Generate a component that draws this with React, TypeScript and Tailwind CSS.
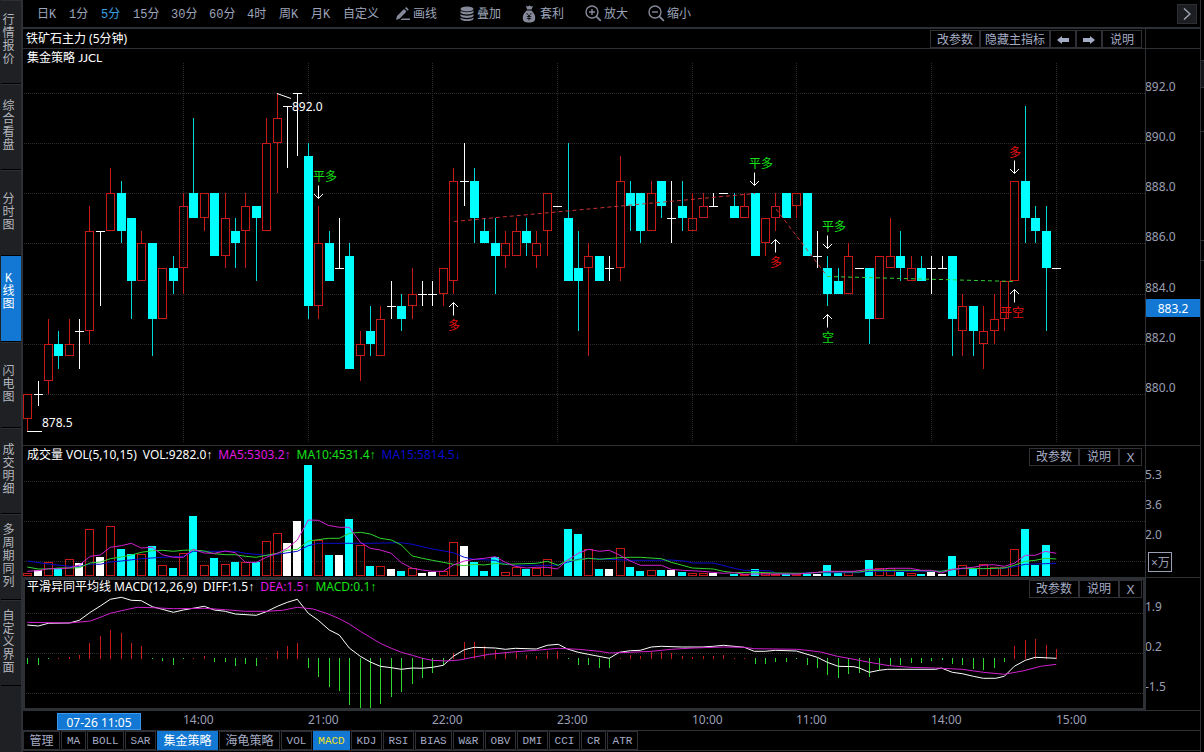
import React from "react";

type Kind = "up" | "down" | "flat";
type Candle = [Kind, number, number, number, number];

const RED = "#c41a1a";
const CYAN = "#00ffff";
const WHITE = "#ffffff";
const GREEN = "#2fd62f";
const MAGENTA = "#d020d0";
const BLUE = "#0a0acc";
const GRID = "#2b2b2b";

const u = (top: number, bottom: number, high = top, low = bottom): Candle => ["up", top, bottom, high, low];
const d = (top: number, bottom: number, high = top, low = bottom): Candle => ["down", top, bottom, high, low];
const f = (price: number, high = price, low = price): Candle => ["flat", price, price, high, low];

const candles: Candle[] = [
  u(880, 879, 880, 878.5), f(880, 880.5, 879.5), u(882, 880.5, 883, 880), d(882, 881.5, 882.5, 881), u(882, 881.5, 883),
  f(882.5, 883, 881), u(886.5, 882.5, 887.5, 882), f(886.5, 886.5, 883.5), u(888, 886.5, 889), d(888, 886.5, 888.5, 886),
  d(887, 884.5, 887, 883), u(886, 884.5, 886.5), d(886, 883, 886, 881.5), u(885, 883), d(885, 884.5, 885.5, 884),
  u(887.5, 885, 888, 884), d(888, 887, 891), u(888, 887, 888, 886.5), d(888, 885.5), u(887, 885.5, 888, 885),
  d(886.5, 886, 887, 885), u(887.5, 886.5, 888, 885), d(887.5, 887, 887.5, 884.5), u(890, 886.5, 891), u(891, 890, 892, 888),
  f(891.5, 891.5, 889), f(892, 892, 889.5), d(889.5, 883.5, 890, 883), u(886, 883.5, 887.5, 883), d(886, 884.5, 886.5),
  f(885, 887, 885), d(885.5, 881, 886), u(882, 881.5, 882.5, 880.5), d(882.5, 882, 883.5, 881.5), u(883, 881.5, 883.5),
  f(883.5, 884.5, 883), d(883.5, 883, 884, 882.5), u(884, 883.5, 885, 883), f(884, 884.5, 883.5), f(884, 884.5, 883.5),
  u(885, 884, 885, 883.5), u(888.5, 884.5, 889, 884), f(888.5, 890, 887.5), d(888.5, 887, 889, 886), d(886.5, 886, 887),
  d(886, 885.5, 887, 884), u(886, 885.5, 886.5, 885), u(886.5, 885.5, 887), d(886.5, 886, 887, 885.5), u(886, 885.5, 886.5, 885),
  u(888, 886.5, 888, 885.5), f(887.5), d(887, 884.5, 890), d(885, 884.5, 886.5, 882.5), u(885.5, 885, 886, 881.5),
  d(885.5, 884.5), f(885, 885.5, 884.5), u(888.5, 885, 889.5, 884.5), d(888, 887.5, 888.5, 886.5), d(888, 886.5, 888, 886),
  u(888, 886.5, 888.5), d(888.5, 887.5, 888.5, 887), f(887, 888.5, 886), d(887.5, 887, 888.5, 886.5), u(887, 886.5, 888),
  u(887.5, 887, 888), f(887.5, 888, 887.5), f(888), d(887.5, 887, 888), u(887.5, 887, 888),
  d(888, 885.5), u(887, 886, 887, 885.5), u(887.5, 887, 888, 886.5), d(888, 887), u(888, 887.5, 888, 887),
  d(888, 885.5), f(885.5, 886.5, 885), d(885, 884, 885.5, 883.5), d(884.5, 884, 885), u(885.5, 884, 886),
  f(885), d(885, 883, 885, 882), u(885.5, 883), u(885.5, 885, 887), d(885.5, 885, 886.5, 884.5),
  u(885, 884.5, 885.5), d(885, 884.5, 885.5), f(885, 885.5, 884), f(885, 885.5), d(885.5, 883, 885.5, 881.5),
  u(883.5, 882.5, 884, 881.5), d(883.5, 882.5, 883.5, 881.5), u(882.5, 882, 883.5, 881), u(883, 882.5, 884, 882), u(884.5, 883, 884.5, 882.5),
  u(888.5, 884.5), d(888.5, 887, 891.5, 886), d(887, 886.5, 887.5, 886), d(886.5, 885, 887.5, 882.5), f(885),
];

const volumes = [
  3, 6, 14, 8, 17, 13, 47, 19, 50, 27, 22, 22, 30, 11, 8, 23, 60, 11, 18, 12, 14, 14, 14, 35, 43,
  33, 55, 111, 36, 21, 21, 57, 31, 10, 10, 7, 5, 8, 3, 4, 5, 34, 30, 14, 5, 19, 4, 9, 7, 8,
  17, 0, 47, 42, 27, 7, 7, 28, 9, 5, 6, 6, 6, 4, 3, 3, 3, 0, 2, 2, 7, 3, 2, 2, 2,
  2, 2, 11, 3, 4, 0, 16, 8, 8, 4, 3, 2, 4, 2, 20, 11, 8, 12, 9, 9, 27, 47, 11, 31, 0,
];

const histogram = [
  -6, -7, -1, 1, 2, 4, 16, 23, 29, 26, 16, 13, -1, -3, -7, -1, 1, 3, -4, -4, -8, -6, -8, 1, 8,
  13, 16, -10, -19, -29, -33, -47, -50, -50, -46, -39, -34, -26, -20, -15, -7, 6, 17, 17, 13, 9, 7, 7, 4, 3,
  8, 8, -1, -7, -7, -10, -10, 1, 4, 3, 7, 7, 6, 3, 2, 3, 3, 4, 1, 1, -6, -6, -4, -4, -1,
  -7, -10, -17, -20, -16, -15, -19, -12, -8, -7, -5, -5, -3, -2, -6, -7, -11, -12, -10, -4, 13, 19, 20, 14, 10,
];

/* Curve samples: one string per part of the session, in thirds of a pixel. */
type Curve = [string, string, string];
const ORIGINS = [0, 1200, 2412];

const ma5: Curve = [
  "82,394 115,392 145,386 176,386 208,384 238,375 271,349 301,345 331,322 364,317 394,310 424,324 457,322 487,344 520,352 550,352 580,328 613,339 643,340 676,333 706,338 736,367 769,367 799,352 832,340 862,325 892,300 925,240 955,241 985,256 1018,262 1048,262 1081,307 1111,325 1141,330 1174,340",
  "4,368 37,385 67,390 97,394 130,394 160,375 193,363 223,358 253,355 286,350 316,367 346,379 379,384 409,382 442,382 472,387 502,361 535,340 565,328 598,334 628,331 658,345 691,363 721,376 784,376 814,388 847,391 907,394 970,400 1003,398 1033,403 1063,402 1189,402",
  "9,400 70,394 150,394 196,388 226,388 256,385 319,385 352,391 382,391 412,399 445,388 508,382 538,376 568,374 601,379 631,370 664,346 694,346 724,334 757,340",
];
const ma10: Curve = [
  "82,381 115,387 145,387 176,384 208,384 238,383 271,369 301,366 331,356 364,351 394,345 424,337 457,332 487,331 520,334 550,331 580,330 613,333 643,341 676,344 706,344 736,349 769,352 799,346 832,340 862,331 892,328 925,303 955,299 985,295 1018,295 1048,280 1081,277 1111,282 1141,295 1174,300",
  "4,315 37,348 67,355 97,361 130,367 160,373 193,377 223,373 253,375 286,370 316,373 409,370 442,364 475,376 502,361 535,360 565,355 598,358 658,353 691,352 721,352 784,356 814,367 847,376 877,384 940,387 970,394 1003,398 1063,397 1126,399 1189,400",
  "9,400 70,395 166,396 196,391 319,391 412,394 445,388 475,385 538,386 601,384 631,376 664,364 694,361 724,355 757,357",
];
const ma15: Curve = [
  "82,363 145,372 208,379 238,379 271,372 301,373 331,366 364,363 424,356 487,352 550,349 580,334 706,334 736,340 799,346 832,343 892,334 925,317 955,310 1111,310",
  "4,308 37,313 97,327 160,338 193,352 223,358 286,361 316,373 346,376 442,376 472,376 502,367 535,358 568,355 628,358 691,361 754,361 814,360 860,364 877,369 940,369 1003,385 1033,391 1115,393 1126,400 1189,402",
  "9,398 166,398 196,394 412,394 445,389 475,386 601,385 631,380 664,373 724,371 757,370",
];
const diff: Curve = [
  "82,555 115,558 145,550 208,549 238,541 271,517 301,498 331,478 364,472 394,481 424,482 457,500 487,508 520,517 550,510 613,499 643,510 676,514 706,522 769,526 799,515 832,499 862,487 892,478 925,520 955,541 988,570 1018,585 1048,624 1081,649 1111,666 1141,679 1174,683",
  "4,688 37,684 67,685 97,682 130,676 160,649 193,629 223,622 286,624 316,628 346,625 409,627 442,616 475,613 502,627 535,637 565,643 628,655 658,637 691,632 721,631 754,621 784,619 847,621 907,621 940,619 970,616 1033,622 1063,634 1096,634 1126,631 1189,633",
  "0,640 40,652 70,667 103,679 150,680 166,684 196,697 226,691 250,688 395,688 412,684 445,697 475,701 508,709 538,715 575,715 601,709 631,679 664,661 694,652 757,655",
];
const dea: Curve = [
  "82,547 208,549 271,543 301,532 331,520 364,512 412,502 457,503 520,506 613,505 676,509 736,514 799,514 847,511 892,502 940,507 985,522 1018,536 1048,552 1081,574 1111,592 1141,610 1174,625",
  "4,637 37,646 67,655 97,661 140,663 178,660 223,651 268,643 346,635 409,631 475,625 535,628 598,634 628,639 691,637 754,634 814,628 880,624 970,621 1033,622 1063,626 1189,628",
  "9,631 50,636 100,649 150,658 196,667 256,677 319,682 395,684 475,688 538,697 601,703 660,692 710,679 757,673",
];

const curvePoints = (curve: Curve) =>
  curve
    .flatMap((part, k) =>
      part.split(" ").map((pair) => {
        const [x, y] = pair.split(",").map(Number);
        return `${((x + ORIGINS[k]) / 3).toFixed(1)},${(440 + y / 3).toFixed(1)}`;
      }),
    )
    .join(" ");

const colX = (i: number) => Math.floor(27.61 + 10.393 * i);
const rowY = (price: number) => Math.round(93 + (892 - price) * 25.07);
const timeMarks: [number, string][] = [
  [183, "14:00"], [308, "21:00"], [432, "22:00"], [557, "23:00"],
  [692, "10:00"], [796, "11:00"], [931, "14:00"], [1056, "15:00"],
];

const UI = "font-['Liberation_Mono','Noto_Sans_CJK_SC',monospace]";
const TXT = "font-['Noto_Sans','Noto_Sans_CJK_SC',sans-serif]";

function Plot({ left, top, label, children }: { left: number; top: number; label: string; children: React.ReactNode }) {
  return (
    <svg className="block h-full w-full overflow-hidden" role="img" aria-label={label}>
      <g transform={`translate(${-left} ${-top})`}>{children}</g>
    </svg>
  );
}

function HLine({ y }: { y: number }) {
  return <line x1="24" x2="4000" y1={y + 0.5} y2={y + 0.5} stroke={GRID} strokeDasharray="1 1" shapeRendering="crispEdges" />;
}

function Curve({ curve, color }: { curve: Curve; color: string }) {
  return <polyline points={curvePoints(curve)} fill="none" stroke={color} strokeWidth="1" />;
}

function CandleMark({ i, c }: { i: number; c: Candle }) {
  const [kind, top, bottom, high, low] = c;
  const x = colX(i);
  const [t, b, h, l] = [rowY(top), rowY(bottom), rowY(high), rowY(low)];
  if (kind === "flat") {
    return (
      <g fill={WHITE}>
        <rect x={x - 4} y={t} width="9" height="1" />
        {l > h && <rect x={x} y={h} width="1" height={l - h} />}
      </g>
    );
  }
  if (kind === "down") {
    return (
      <g fill={CYAN}>
        <rect x={x - 4} y={t} width="9" height={b - t} />
        {l > h && <rect x={x} y={h} width="1" height={l - h} opacity="0.85" />}
      </g>
    );
  }
  return (
    <g fill={RED}>
      <rect x={x - 3.5} y={t + 0.5} width="8" height={b - t - 1} fill="none" stroke={RED} />
      {t > h && <rect x={x} y={h} width="1" height={t - h} />}
      {l > b && <rect x={x} y={b} width="1" height={l - b} />}
    </g>
  );
}

const BUY = "#e81010";
const SELL = "#14e014";
const signals: { text: string; x: number; y: number; color: string; ax: number; tip: number; up: boolean }[] = [
  { text: "平多", x: 313, y: 181, color: SELL, ax: 318, tip: 198, up: false },
  { text: "多", x: 448, y: 330, color: BUY, ax: 453, tip: 302, up: true },
  { text: "平多", x: 749, y: 168, color: SELL, ax: 754, tip: 185, up: false },
  { text: "多", x: 770, y: 267, color: BUY, ax: 775, tip: 239, up: true },
  { text: "平多", x: 822, y: 231, color: SELL, ax: 827, tip: 248, up: false },
  { text: "空", x: 822, y: 342, color: SELL, ax: 827, tip: 314, up: true },
  { text: "多", x: 1009, y: 157, color: BUY, ax: 1014, tip: 173, up: false },
  { text: "平空", x: 1000, y: 317, color: BUY, ax: 1014, tip: 289, up: true },
];

function PriceChart() {
  return (
    <Plot left={23} top={49} label="铁矿石主力 K线图">
      {[93, 143, 193, 243, 294, 344, 394].map((y) => <HLine key={y} y={y} />)}
      {timeMarks.map(([x]) => (
        <line key={x} x1={x + 0.5} x2={x + 0.5} y1="63" y2="443" stroke={GRID} strokeDasharray="1 1" shapeRendering="crispEdges" />
      ))}
      <g shapeRendering="crispEdges">
        {candles.map((c, i) => <CandleMark key={i} i={i} c={c} />)}
      </g>
      <g fill="none" strokeDasharray="4 3">
        <path d="M454 221.5L755 193.5" stroke="#c83232" />
        <path d="M776 209L827 276" stroke="#c83232" />
        <path d="M827 276.5L1015 281.5" stroke="#35d035" />
      </g>
      {signals.map((s) => {
        const dir = s.up ? 1 : -1;
        const tip = s.tip + 0.5;
        return (
          <g key={`${s.ax}-${s.tip}`}>
            <path d={`M${s.ax + 0.5} ${tip}v${13 * dir}M${s.ax - 4} ${tip + 4.5 * dir}l4.5 ${-4.5 * dir}l4.5 ${4.5 * dir}`} fill="none" stroke={WHITE} />
            <text x={s.x} y={s.y} fill={s.color} className={`${TXT} text-[12px]`}>{s.text}</text>
          </g>
        );
      })}
      <g fill="none" stroke={WHITE}>
        <path d="M277 93.5L291 98.5" />
        <path d="M27 431.5H42" />
      </g>
      <text x="292" y="111" fill={WHITE} className={`${TXT} text-[12px]`}>892.0</text>
      <text x="42" y="427" fill={WHITE} className={`${TXT} text-[12px]`}>878.5</text>
    </Plot>
  );
}

function VolumeChart() {
  return (
    <Plot left={23} top={446} label="成交量">
      {[481, 521, 561].map((y) => <HLine key={y} y={y} />)}
      <g shapeRendering="crispEdges">
        {volumes.map((v, i) => {
          if (!v) return null;
          const kind = candles[i][0];
          const x = colX(i) - 4;
          return kind === "up" ? (
            <rect key={i} x={x + 0.5} y={576.5 - v} width="8" height={Math.max(v - 1, 1)} fill="none" stroke={RED} />
          ) : (
            <rect key={i} x={x} y={576 - v} width="8" height={v} fill={kind === "down" ? CYAN : WHITE} />
          );
        })}
      </g>
      <Curve curve={ma15} color={BLUE} />
      <Curve curve={ma10} color={GREEN} />
      <Curve curve={ma5} color={MAGENTA} />
    </Plot>
  );
}

function MacdChart() {
  return (
    <Plot left={25} top={580} label="平滑异同平均线">
      {[613, 653, 693].map((y) => <HLine key={y} y={y} />)}
      <g shapeRendering="crispEdges">
        {histogram.map((v, i) => (
          <rect key={i} x={colX(i)} y={v > 0 ? 659 - v : 658} width="1" height={Math.abs(v)} fill={v > 0 ? RED : GREEN} />
        ))}
      </g>
      <Curve curve={diff} color={WHITE} />
      <Curve curve={dea} color={MAGENTA} />
    </Plot>
  );
}

function AxisLabels({ top, items, children }: { top: number; items: [number, string][]; children?: React.ReactNode }) {
  return (
    <Plot left={1145} top={top} label="刻度">
      {items.map(([y, t]) => (
        <text key={t} x="1144" y={y + 4} fill="#9a9fb4" className={`${TXT} text-[12px]`}>{t}</text>
      ))}
      {children}
    </Plot>
  );
}

function PaneButtons({ place }: { place: string }) {
  return (
    <div className={`absolute flex ${place}`}>
      <SmallButton size="w-[50px] pt-[2px]">改参数</SmallButton>
      <SmallButton size="w-10 pt-[2px]">说明</SmallButton>
      <SmallButton size="w-[23px]"><span className={`${TXT} text-[13px]`}>X</span></SmallButton>
    </div>
  );
}

function SmallButton({ size, label, children }: { size: string; label?: string; children: React.ReactNode }) {
  return (
    <button aria-label={label} className={`${size} flex h-[18px] items-center justify-center border border-[#2e3036] text-[12px] leading-4 whitespace-nowrap text-[#a4abc4]`}>
      {children}
    </button>
  );
}

function Arrow({ flip = false }: { flip?: boolean }) {
  return (
    <svg width="12" height="8" viewBox="0 0 12 8" fill="#a4abc4" className={flip ? "rotate-180" : ""}>
      <path d="M0 4L5 0V2H12V6H5V8Z" />
    </svg>
  );
}

function Legend({ place, items }: { place: string; items: [string, string, string?][] }) {
  return (
    <div className={`${TXT} absolute flex gap-[6px] text-[12px] leading-4 whitespace-nowrap ${place}`}>
      {items.map(([t, c, arrow]) => (
        <span key={t} className={c}>
          {t}
          {arrow && <span className="font-['Liberation_Sans',sans-serif]">{arrow}</span>}
        </span>
      ))}
    </div>
  );
}

const sideItems = ["综合看盘", "分时图", "K线图", "闪电图", "成交明细", "多周期同列", "自定义界面"];

function SideItem({ text, height, active = false }: { text: string; height: string; active?: boolean }) {
  return (
    <button
      className={`${height} flex w-full shrink-0 flex-col items-center justify-center border-b border-black pr-[5px] text-[12px] leading-[13px] ${
        active ? "bg-[#1278d4] pb-3 text-white" : "border-t border-t-[#2c2e33] text-[#b4b6bc]"
      }`}
    >
      {Array.from(text).map((ch, i) => <span key={i}>{ch}</span>)}
    </button>
  );
}

const periods: [string, string][] = [
  ["日K", "w-8"], ["1分", "w-8"], ["5分", "w-8"], ["15分", "w-[38px]"], ["30分", "w-[38px]"],
  ["60分", "w-[38px]"], ["4时", "w-8"], ["周K", "w-8"], ["月K", "w-8"], ["自定义", "w-[53px]"],
];

function PencilIcon() {
  return (
    <svg width="14" height="14" viewBox="0 0 14 14" fill="currentColor">
      <path d="M0 13L1 9L8 2L10.500 4.500L3.800 11.500Z" />
      <path d="M9 1.200L10.200 0L12.800 2.600L11.500 3.800Z" />
      <path d="M6 11.500H14V13H4.500Z" />
    </svg>
  );
}
function StackIcon() {
  return (
    <svg width="14" height="16" viewBox="0 0 14 16" fill="currentColor">
      <ellipse cx="7" cy="3" rx="6.500" ry="2.500" />
      <path d="M0.500 4.500C2 6.700 12 6.700 13.500 4.500V6.500C12 9 2 9 0.500 6.500Z" />
      <path d="M0.500 8.100C2 10.300 12 10.300 13.500 8.100V10C12 12.500 2 12.500 0.500 10Z" />
      <path d="M0.500 11.600C2 13.800 12 13.800 13.500 11.600V13C12 15.700 2 15.700 0.500 13Z" />
    </svg>
  );
}
function BagIcon() {
  return (
    <svg width="14" height="18" viewBox="0 0 14 18" fill="currentColor">
      <path d="M4 0.500L6 1.500L7.500 0.300L9 1.500L11 1L9.500 4.500H5Z" />
      <path d="M4.500 5.500H9.500C12 8 13.500 10.500 13.200 13.500C13 16.500 11 17.500 7 17.500C3 17.500 1 16.500 0.800 13.500C0.500 10.500 2 8 4.500 5.500Z" />
      <path d="M4.500 8L7 11L9.500 8M7 11V15.500M4.800 11.500H9.200M4.800 13.500H9.200" fill="none" stroke="#000" strokeWidth="0.800" />
    </svg>
  );
}
function ZoomIcon({ plus = false }: { plus?: boolean }) {
  return (
    <svg width="17" height="17" viewBox="0 0 17 17" fill="none" stroke="currentColor" strokeWidth="1.400">
      <circle cx="7" cy="7" r="6" />
      <path d="M11.300 11.300L15.800 15.800" strokeWidth="1.800" />
      <path d={plus ? "M4 7H10M7 4V10" : "M4 7H10"} />
    </svg>
  );
}

const tools: [string, React.ReactNode, string][] = [
  ["画线", <PencilIcon />, "w-16 gap-[3px]"],
  ["叠加", <StackIcon />, "w-[62px] gap-[3px]"],
  ["套利", <BagIcon />, "w-[63px] gap-1"],
  ["放大", <ZoomIcon plus />, "w-[63px] gap-[2px]"],
  ["缩小", <ZoomIcon />, "w-[63px] gap-[2px]"],
];

const tabs: [string, string][] = [
  ["管理", "w-[37px]"], ["MA", "w-[25px]"], ["BOLL", "w-[37px]"], ["SAR", "w-[31px]"], ["集金策略", "w-[61px]"],
  ["海龟策略", "w-[61px]"], ["VOL", "w-[31px]"], ["MACD", "w-[37px]"], ["KDJ", "w-[31px]"], ["RSI", "w-[31px]"],
  ["BIAS", "w-[37px]"], ["W&R", "w-[31px]"], ["OBV", "w-[31px]"], ["DMI", "w-[31px]"], ["CCI", "w-[31px]"],
  ["CR", "w-[25px]"], ["ATR", "w-[31px]"],
];

function tabStyle(name: string) {
  if (name === "集金策略") return "border-[#1278d4] bg-[#1278d4] pt-[2px] text-white text-[12px]";
  if (name === "MACD") return "border-[#1278d4] bg-[#1278d4] text-[#f0e020] text-[11px]";
  return /[A-Z]/.test(name) ? "border-[#2e3036] text-[#a4abc4] text-[11px]" : "border-[#2e3036] pt-[2px] text-[#a4abc4] text-[12px]";
}

export default function App() {
  return (
    <div className={`${UI} flex min-h-screen bg-black text-[12px] text-[#9da5ba]`}>
      <nav className="flex w-[23px] shrink-0 flex-col border-r-2 border-[#2d3035] bg-[#1e2024] pl-px">
        <SideItem text="行情报价" height="h-[84px] pb-[2px]" />
        {sideItems.map((t) => <SideItem key={t} text={t} height="h-[86px]" active={t === "K线图"} />)}
      </nav>

      <main className="flex min-w-0 flex-1 flex-col">
        <header className="flex h-[29px] items-center border-b-2 border-[#2d3035] pl-[14px]">
          {periods.map(([t, w]) => (
            <button key={t} className={`${w} shrink-0 pt-[2px] text-left leading-4 whitespace-nowrap ${t === "5分" ? "text-[#3aa0e0]" : ""}`}>{t}</button>
          ))}
          {tools.map(([t, icon, w]) => (
            <button key={t} className={`${w} flex shrink-0 items-center leading-4 whitespace-nowrap`}>
              <span className="text-[#85899a]">{icon}</span>
              <span className="pt-[2px]">{t}</span>
            </button>
          ))}
          <button aria-label="更多" className="mr-[3px] ml-auto flex size-5 items-center justify-center border border-[#2c2e33] bg-[#1c1e22]">
            <svg width="8" height="12" viewBox="0 0 8 12" fill="none" stroke="#a0a4b0" strokeWidth="1.500">
              <path d="M1 0.500L7 6L1 11.500" />
            </svg>
          </button>
        </header>

        <section className="grid grid-cols-[minmax(0,1fr)_55px]">
          <div className="flex h-5 items-end justify-between border-b border-[#2d3035] pr-[3px] pl-[3px]">
            <h1 className={`${TXT} leading-[18px] whitespace-nowrap text-white`}>铁矿石主力 (5分钟)</h1>
            <div className="flex">
              <SmallButton size="w-[50px] pt-[4px]">改参数</SmallButton>
              <SmallButton size="w-[70px] pt-[4px]">隐藏主指标</SmallButton>
              <SmallButton size="w-[26px] pt-[2px]" label="上一个"><Arrow /></SmallButton>
              <SmallButton size="w-[26px] pt-[2px]" label="下一个"><Arrow flip /></SmallButton>
              <SmallButton size="w-10 pt-[4px]">说明</SmallButton>
            </div>
          </div>
          <div className="border-b border-l border-[#2d3035]" />

          <div className="relative h-[397px] border-b border-[#2d3035]">
            <PriceChart />
            <div className={`${TXT} absolute top-px left-1 leading-4 text-white`}>
              集金策略 <span className="font-['Lato',sans-serif]">JJCL</span>
            </div>
          </div>
          <div className="h-[397px] border-b border-l border-[#2d3035]">
            <AxisLabels top={49} items={[[87, "892.0"], [137, "890.0"], [187, "888.0"], [237, "886.0"], [288, "884.0"], [338, "882.0"], [388, "880.0"]]}>
              <rect x="1144" y="299" width="56" height="18" fill="#1278d4" />
              <text x="1172" y="313" textAnchor="middle" fill="#fff" className={`${TXT} text-[12px]`}>883.2</text>
            </AxisLabels>
          </div>

          <div className="relative h-[131px]">
            <VolumeChart />
            <Legend
              place="top-px left-1"
              items={[
                ["成交量 VOL(5,10,15)", "text-white"], ["VOL:9282.0", "text-white", "↑"], ["MA5:5303.2", "text-[#e018e0]", "↑"],
                ["MA10:4531.4", "text-[#18e018]", "↑"], ["MA15:5814.5", "text-[#0a0ad0]", "↓"],
              ]}
            />
            <PaneButtons place="top-[2px] right-[3px]" />
          </div>
          <div className="h-[131px] border-l border-[#2d3035]">
            <AxisLabels top={446} items={[[475, "5.3"], [505, "3.6"], [535, "2.0"]]}>
              <rect x="1147.500" y="552.500" width="23" height="19" fill="none" stroke="#9a9fb4" />
              <text x="1150" y="567" fill="#9a9fb4" className={`${TXT} text-[12px]`}>×万</text>
            </AxisLabels>
          </div>

          <div className="relative h-[134px] border-x-2 border-y-3 border-[#2d3035]">
            <MacdChart />
            <Legend
              place="-top-px left-[2px]"
              items={[
                ["平滑异同平均线 MACD(12,26,9)", "text-white"], ["DIFF:1.5", "text-white", "↑"],
                ["DEA:1.5", "text-[#e018e0]", "↑"], ["MACD:0.1", "text-[#18e018]", "↑"],
              ]}
            />
            <PaneButtons place="top-0 right-px" />
          </div>
          <div className="h-[134px] border-y border-l border-[#2d3035]">
            <AxisLabels top={578} items={[[607, "1.9"], [647, "0.2"], [687, "-1.5"]]} />
          </div>
        </section>

        <div className="h-5 border-b border-[#2d3035]">
          <Plot left={23} top={711} label="时间轴">
            {timeMarks.map(([x, t]) => (
              <text key={x} x={x} y="724" fill="#9a9fb4" className={`${TXT} text-[12px]`}>{t}</text>
            ))}
            <rect x="57.500" y="713.500" width="83" height="16" fill="#1278d4" stroke="#3a98ec" />
            <text x="99" y="727" textAnchor="middle" fill="#fff" className={`${TXT} text-[12px]`}>07-26 11:05</text>
          </Plot>
        </div>

        <footer className="flex h-5 gap-px border-b border-[#2d3035]">
          {tabs.map(([t, w]) => (
            <button key={t} className={`${w} flex h-[19px] shrink-0 items-center justify-center border leading-4 whitespace-nowrap ${tabStyle(t)}`}>{t}</button>
          ))}
        </footer>
      </main>

      <aside className="flex w-1 shrink-0 flex-col border-l border-[#2d3035]">
        <div className="mt-[60px] h-7 border-y border-[#2d3035] bg-[#141518]" />
        <div className="h-11 border-b border-[#2d3035]" />
        <div className="h-[109px] border-b border-[#2d3035]" />
        <div className="h-5 border-b border-[#2d3035]" />
      </aside>
    </div>
  );
}
